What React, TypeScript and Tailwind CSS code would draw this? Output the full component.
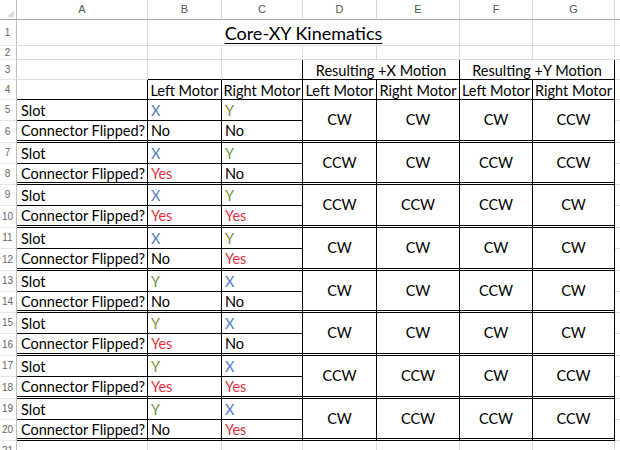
import React from "react";

type Block = {
  slot: [string, string];
  flip: [string, string];
  res: [string, string, string, string];
};

const blocks: Block[] = [
  { slot: ["X", "Y"], flip: ["No", "No"], res: ["CW", "CW", "CW", "CCW"] },
  { slot: ["X", "Y"], flip: ["Yes", "No"], res: ["CCW", "CW", "CCW", "CCW"] },
  { slot: ["X", "Y"], flip: ["Yes", "Yes"], res: ["CCW", "CCW", "CCW", "CW"] },
  { slot: ["X", "Y"], flip: ["No", "Yes"], res: ["CW", "CW", "CW", "CW"] },
  { slot: ["Y", "X"], flip: ["No", "No"], res: ["CW", "CW", "CCW", "CW"] },
  { slot: ["Y", "X"], flip: ["Yes", "No"], res: ["CW", "CW", "CW", "CW"] },
  { slot: ["Y", "X"], flip: ["Yes", "Yes"], res: ["CCW", "CCW", "CW", "CCW"] },
  { slot: ["Y", "X"], flip: ["No", "Yes"], res: ["CW", "CCW", "CCW", "CCW"] },
];

const cols = ["A", "B", "C", "D", "E", "F", "G"];

// plain gridline cell
const grid = "border-r border-b border-[#dcdcdc]";

function RowHead({ n }: { n: number }) {
  return (
    <div className="flex items-center justify-center border-r border-b border-r-[#bdbdbd] border-b-[#e6e6e6] pr-[1px] font-['Liberation_Sans',sans-serif] text-[10px] text-[#666]">
      {n}
    </div>
  );
}

function slotColor(v: string) {
  return v === "X" ? "text-[#4f81bd]" : "text-[#76923c]";
}

function flipColor(v: string) {
  return v === "Yes" ? "text-[#e0303f]" : "text-black";
}

export default function App() {
  return (
    <div className="h-[450px] w-[620px] overflow-hidden bg-white font-['Lato','Noto_Sans',sans-serif] text-[14.5px] leading-none text-black">
      <div className="grid grid-cols-[17px_131px_74px_81px_74px_83px_73px_82px_1fr] grid-rows-[20px_26px_14px_20px_20px_21px_22px_21px_21px_21px_22px_21px_22px_21px_21px_21px_22px_21px_22px_21px_21px_20px]">
        {/* column headers */}
        <div className="relative border-r border-b border-r-[#bdbdbd] border-b-[#a8a8a8]">
          <svg className="absolute right-[2px] bottom-[2px]" width="7" height="7" viewBox="0 0 7 7">
            <path d="M7 0 L7 7 L0 7 Z" fill="#dcdcdc" />
          </svg>
        </div>
        {cols.map((c) => (
          <div
            key={c}
            className="flex items-center justify-center border-r border-b border-r-[#dadada] border-b-[#a8a8a8] font-['Liberation_Sans',sans-serif] text-[11px] text-[#555]"
          >
            {c}
          </div>
        ))}
        <div className="border-b border-b-[#a8a8a8]" />

        {/* row 1 */}
        <RowHead n={1} />
        <div className={grid} />
        <div className={`col-span-4 flex items-center justify-center pt-[1px] text-[18px] underline decoration-1 underline-offset-[3px] ${grid}`}>
          Core-XY Kinematics
        </div>
        <div className={grid} />
        <div className={grid} />
        <div className="border-b border-[#dcdcdc]" />

        {/* row 2 */}
        <RowHead n={2} />
        {cols.map((c) => (
          <div key={c} className={grid} />
        ))}
        <div className="border-b border-[#dcdcdc]" />

        {/* row 3 */}
        <RowHead n={3} />
        <div className={grid} />
        <div className="border-r border-b border-r-[#dcdcdc] border-b-black" />
        <div className="border-r border-b border-black" />
        <div className="col-span-2 flex items-center justify-center border-r border-b border-black pt-[3px]">
          Resulting +X Motion
        </div>
        <div className="col-span-2 flex items-center justify-center border-r border-b border-black pt-[3px]">
          Resulting +Y Motion
        </div>
        <div className="border-b border-[#dcdcdc]" />

        {/* row 4 */}
        <RowHead n={4} />
        <div className="border-r border-b border-black" />
        {["Left Motor", "Right Motor", "Left Motor", "Right Motor", "Left Motor", "Right Motor"].map((t, i) => (
          <div key={i} className="flex items-center justify-center whitespace-nowrap border-r border-b border-black pt-[3px]">
            {t}
          </div>
        ))}
        <div className="border-b border-[#dcdcdc]" />

        {/* data blocks */}
        {blocks.map((b, i) => (
          <React.Fragment key={i}>
            <RowHead n={5 + i * 2} />
            <div className="flex items-center border-r border-b border-black pl-[4px] pt-[3px]">Slot</div>
            <div className={`flex items-center border-r border-b border-black pl-[3px] pt-[3px] ${slotColor(b.slot[0])}`}>
              {b.slot[0]}
            </div>
            <div className={`flex items-center border-r border-b border-black pl-[3px] pt-[3px] ${slotColor(b.slot[1])}`}>
              {b.slot[1]}
            </div>
            {b.res.map((r, j) => (
              <div
                key={j}
                className="row-span-2 flex items-center justify-center border-r border-b-[3px] border-double border-black pt-[1px]"
              >
                {r}
              </div>
            ))}
            <div className="border-b border-[#dcdcdc]" />

            <RowHead n={6 + i * 2} />
            <div className="flex items-center whitespace-nowrap border-r border-b-[3px] border-double border-black pl-[4px] pt-[2px]">
              Connector Flipped?
            </div>
            <div className={`flex items-center border-r border-b-[3px] border-double border-black pl-[3px] pt-[2px] ${flipColor(b.flip[0])}`}>
              {b.flip[0]}
            </div>
            <div className={`flex items-center border-r border-b-[3px] border-double border-black pl-[3px] pt-[2px] ${flipColor(b.flip[1])}`}>
              {b.flip[1]}
            </div>
            <div className="border-b border-[#dcdcdc]" />
          </React.Fragment>
        ))}

        {/* row 21 */}
        <RowHead n={21} />
        {cols.map((c) => (
          <div key={c} className={grid} />
        ))}
        <div className="border-b border-[#dcdcdc]" />
      </div>
    </div>
  );
}
